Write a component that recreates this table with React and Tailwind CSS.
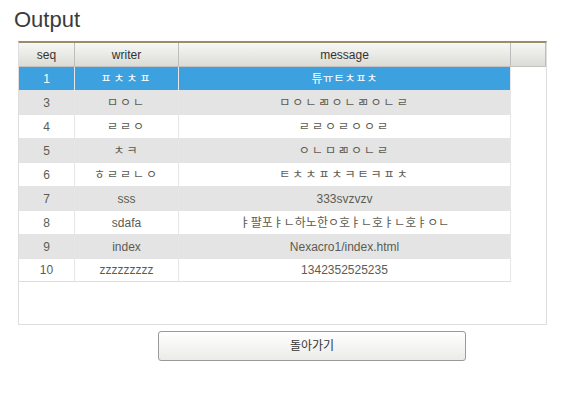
import React from "react";

const rows = [
  { seq: "1", writer: "ㅍㅊㅊㅍ", message: "튜ㅠㅌㅊㅍㅊ", h: "h-[23px]", tone: "sel" },
  { seq: "3", writer: "ㅁㅇㄴ", message: "ㅁㅇㄴㄻㅇㄴㄻㅇㄴㄹ", h: "h-[25px]", tone: "alt" },
  { seq: "4", writer: "ㄹㄹㅇ", message: "ㄹㄹㅇㄹㅇㅇㄹ", h: "h-[23px]", tone: "plain" },
  { seq: "5", writer: "ㅊㅋ", message: "ㅇㄴㅁㄻㅇㄴㄹ", h: "h-[25px]", tone: "alt" },
  { seq: "6", writer: "ㅎㄹㄹㄴㅇ", message: "ㅌㅊㅊㅍㅊㅋㅌㅋㅍㅊ", h: "h-[23px]", tone: "plain" },
  { seq: "7", writer: "sss", message: "333svzvzv", h: "h-[25px]", tone: "alt" },
  { seq: "8", writer: "sdafa", message: "ㅑ퍌포ㅑㄴ하노한ㅇ호ㅑㄴ호ㅑㄴ호ㅑㅇㄴ", h: "h-[23px]", tone: "plain" },
  { seq: "9", writer: "index", message: "Nexacro1/index.html", h: "h-[25px]", tone: "alt" },
  { seq: "10", writer: "zzzzzzzzz", message: "1342352525235", h: "h-[23px]", tone: "plain" },
];

const toneClass = {
  sel: "bg-[#3ea1df] text-white",
  alt: "bg-[#e4e4e4] text-[#5c5c52]",
  plain: "bg-white text-[#5c5c52]",
};

// bare jamo strings are set a little looser
const isJamo = (s) => /^[\u3131-\u318e]+$/.test(s);

function HeaderCell({ children, className }) {
  return (
    <div className={`flex items-center justify-center border-r border-[#bdbdbd] ${className}`}>
      {children}
    </div>
  );
}

function Cell({ text, className }) {
  return (
    <div
      className={`flex items-center justify-center border-r border-[#e6e6e6] ${
        isJamo(text) ? "tracking-[2px]" : ""
      } ${className}`}
    >
      {text}
    </div>
  );
}

function Row({ row, last }) {
  return (
    <div className={`flex w-[492px] ${row.h} ${toneClass[row.tone]} ${last ? "border-b border-[#dedede]" : ""}`}>
      <Cell text={row.seq} className="w-[56px]" />
      <Cell text={row.writer} className="w-[104px]" />
      <Cell text={row.message} className="w-[332px]" />
    </div>
  );
}

export default function App() {
  return (
    <div
      className="w-[584px] h-[393px] bg-white text-[12px]"
      style={{ fontFamily: '"Liberation Sans", "Noto Sans CJK KR", sans-serif' }}
    >
      {/* title */}
      <div className="h-[41px] pl-[14px] pt-[7px] text-[22px] leading-[26px] text-[#3a3a3a]">
        Output
      </div>

      {/* grid */}
      <div className="ml-[18px] w-[529px] h-[284px] border-t-2 border-[#9b8c6c] border-x border-b border-x-[#dedede] border-b-[#dedede] flex flex-col">
        <div className="flex h-[24px] border-b border-[#c2c2c2] bg-gradient-to-b from-[#f7f7f5] to-[#dcdcd6] text-[#333]">
          <HeaderCell className="w-[56px]">seq</HeaderCell>
          <HeaderCell className="w-[104px]">writer</HeaderCell>
          <HeaderCell className="w-[332px]">message</HeaderCell>
          <div className="flex-1 border-r border-[#bdbdbd]" />
        </div>
        <div className="flex flex-col">
          {rows.map((r, i) => (
            <Row key={r.seq} row={r} last={i === rows.length - 1} />
          ))}
        </div>
      </div>

      {/* back button */}
      <button className="mt-[6px] ml-[158px] w-[308px] h-[30px] rounded-[3px] border border-[#9a9a9a] bg-gradient-to-b from-white to-[#ebebe8] text-[12px] text-[#333] flex items-center justify-center">
        돌아가기
      </button>
    </div>
  );
}
